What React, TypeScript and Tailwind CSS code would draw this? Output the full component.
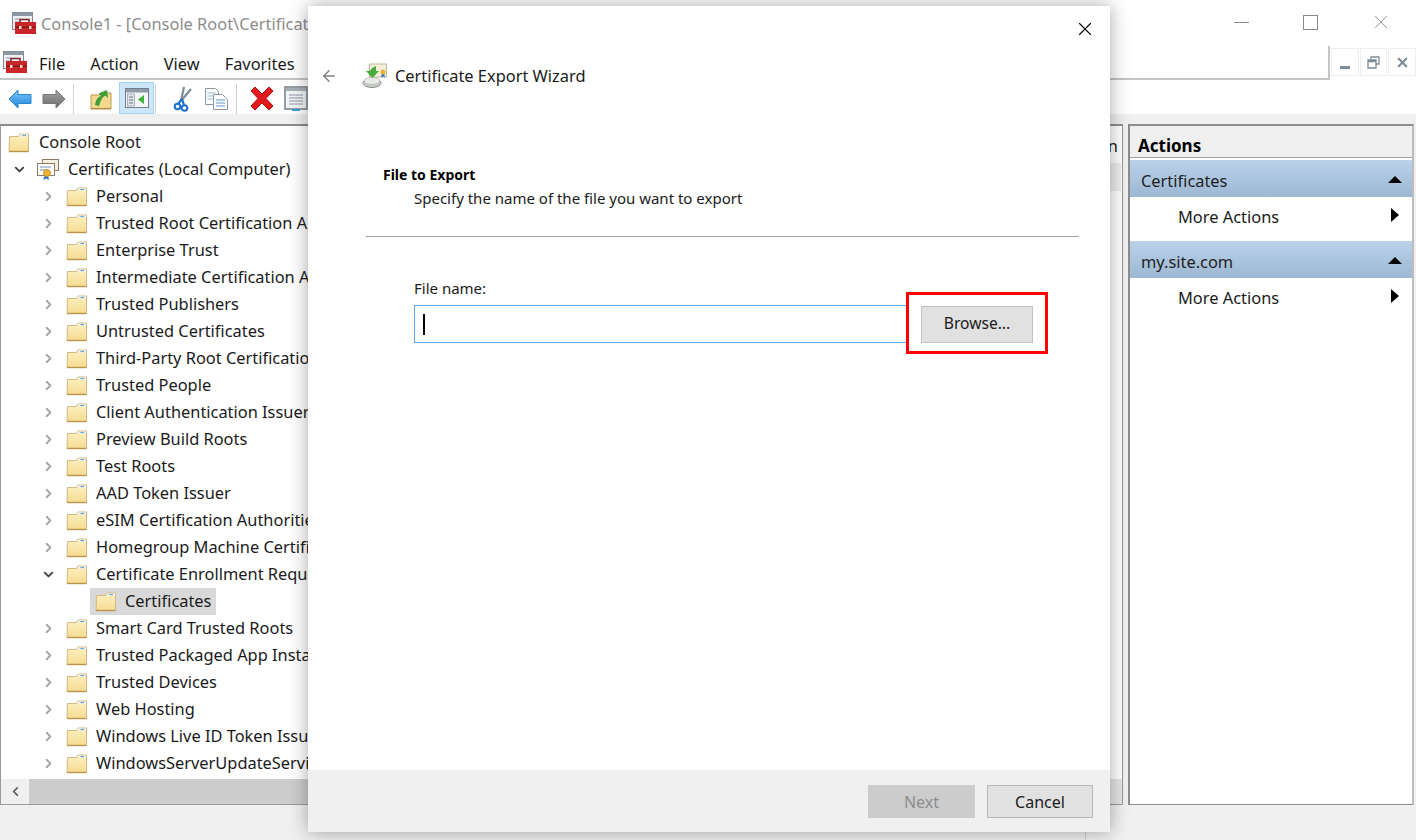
import { ChevronDown, ChevronRight, ArrowLeft, X } from "lucide-react";

const treeItems = [
  "Personal",
  "Trusted Root Certification Authorities",
  "Enterprise Trust",
  "Intermediate Certification Authorities",
  "Trusted Publishers",
  "Untrusted Certificates",
  "Third-Party Root Certification Authorities",
  "Trusted People",
  "Client Authentication Issuers",
  "Preview Build Roots",
  "Test Roots",
  "AAD Token Issuer",
  "eSIM Certification Authorities",
  "Homegroup Machine Certificates",
];

const treeItemsAfter = [
  "Smart Card Trusted Roots",
  "Trusted Packaged App Installation Authorities",
  "Trusted Devices",
  "Web Hosting",
  "Windows Live ID Token Issuer",
  "WindowsServerUpdateServices",
];

function FolderIcon() {
  return (
    <svg width="22" height="20" viewBox="0 0 22 20" className="shrink-0">
      <defs>
        <linearGradient id="fold" x1="0" y1="0" x2="0" y2="1">
          <stop offset="0" stopColor="#fdf0c0" />
          <stop offset="1" stopColor="#f6dc94" />
        </linearGradient>
      </defs>
      <path d="M1.500 3.500h9l1.500-2.500h8.500v17.500H1z" fill="url(#fold)" stroke="#d3b97f" strokeWidth="1" />
      <path d="M12.500 1.500h7.500v2h-9z" fill="#eef1f2" />
      <path d="M14.500 2.500h3.500" stroke="#5aa3dc" strokeWidth="1.200" />
      <path d="M1 18.500h19.500" stroke="#b9954d" strokeWidth="1.400" />
    </svg>
  );
}

function CertStoreIcon() {
  return (
    <svg width="23" height="23" viewBox="0 0 23 23" className="shrink-0">
      <rect x="6.500" y="1.500" width="16" height="11" fill="#f7efe0" stroke="#8a7a66" />
      <rect x="1.500" y="5.500" width="17" height="12" fill="#fffdf8" stroke="#8a7a66" />
      <path d="M4 9h11M4 12h7" stroke="#6f93bd" strokeWidth="1.200" />
      <path d="M9 17l-2 5 3-1.500 3 1.500-1-5z" fill="#2f76c6" />
      <circle cx="11" cy="15" r="3.500" fill="#eeb132" stroke="#c28414" strokeWidth="0.700" />
    </svg>
  );
}

function ToolboxIcon({ size = 24 }: { size?: number }) {
  return (
    <svg width={size} height={size} viewBox="0 0 24 24" className="shrink-0">
      <rect x="0.500" y="1.500" width="20" height="17" fill="#eef0f3" stroke="#7e8792" />
      <rect x="0.500" y="1.500" width="20" height="3.500" fill="#8e98a3" />
      <path d="M3 8h5M3 11h5M3 14h5" stroke="#8e98a3" strokeWidth="1.200" />
      <path d="M8 11V8.500h9V11" fill="none" stroke="#7c2323" strokeWidth="1.500" />
      <rect x="3" y="11" width="21" height="12" fill="#c9262a" />
      <rect x="3" y="15.500" width="21" height="1.500" fill="#8d1717" />
      <rect x="7" y="15" width="2.500" height="3" fill="#e9d8c8" />
      <rect x="17" y="15" width="2.500" height="3" fill="#e9d8c8" />
    </svg>
  );
}

function NavArrow({ dir, gray }: { dir: "left" | "right"; gray?: boolean }) {
  return (
    <svg width="24" height="20" viewBox="0 0 24 20" className="shrink-0">
      <defs>
        <linearGradient id="navBlue" x1="0" y1="0" x2="0" y2="1">
          <stop offset="0" stopColor="#7cc6f7" />
          <stop offset="1" stopColor="#1e86dc" />
        </linearGradient>
        <linearGradient id="navGray" x1="0" y1="0" x2="0" y2="1">
          <stop offset="0" stopColor="#a5a5a5" />
          <stop offset="1" stopColor="#6a6a6a" />
        </linearGradient>
      </defs>
      <path
        d={dir === "left" ? "M1 10 10 1v4.500h13v9H10V19z" : "M23 10 14 1v4.500H1v9h13V19z"}
        fill={gray ? "url(#navGray)" : "url(#navBlue)"}
        stroke={gray ? "#777777" : "#2a86d0"}
        strokeLinejoin="round"
      />
    </svg>
  );
}

function UpFolderIcon() {
  return (
    <svg width="22" height="22" viewBox="0 0 22 22" className="shrink-0">
      <path d="M1 7h8l2-2h10v16H1z" fill="#f3d98d" stroke="#bd9a52" />
      <path d="M1 20.500h20" stroke="#b58f45" strokeWidth="1.200" />
      <path d="M5 17c1-6 3-8 6-9L8.500 5.500 17 2l1 8-2.500-2.500C12 9 11 12 9 18z" fill="#3f9e36" />
    </svg>
  );
}

function ConsoleTreeIcon() {
  return (
    <svg width="24" height="20" viewBox="0 0 24 20" className="shrink-0">
      <rect x="0.500" y="0.500" width="23" height="19" fill="#f4f6f8" stroke="#76808c" />
      <rect x="1" y="1" width="22" height="3.500" fill="#8f9aa6" />
      <rect x="2.500" y="6" width="7" height="12" fill="#dde3e9" stroke="#8f9aa6" strokeWidth="0.700" />
      <path d="M4 9h4M4 12h4M4 15h4" stroke="#6c7a88" />
      <path d="M19 7v9l-6-4.500z" fill="#3fb23f" />
    </svg>
  );
}

function ScissorsIcon() {
  return (
    <svg width="20" height="26" viewBox="0 0 20 26" className="shrink-0">
      <path d="M8 15 11 1M8 15 18 3" stroke="#7e8c99" strokeWidth="2.200" fill="none" />
      <path d="M9 13 5 18M9 13l2 6" stroke="#1c6fcc" strokeWidth="2.200" fill="none" />
      <circle cx="4.500" cy="20.500" r="2.800" fill="none" stroke="#1c6fcc" strokeWidth="2" />
      <circle cx="11.500" cy="22" r="2.800" fill="none" stroke="#1c6fcc" strokeWidth="2" />
    </svg>
  );
}

function CopyIcon() {
  return (
    <svg width="25" height="24" viewBox="0 0 25 24" className="shrink-0">
      <path d="M1.500 1.500h10l3 3v13h-13z" fill="#fbfcfd" stroke="#8d97a1" />
      <path d="M3.500 6h8M3.500 9h8M3.500 12h5" stroke="#9fb6cb" />
      <path d="M9.500 7.500h9l5 5v10h-14z" fill="#fbfcfd" stroke="#8d97a1" />
      <path d="M12 13h9M12 16h9M12 19h9" stroke="#5d9ad2" />
    </svg>
  );
}

function DeleteIcon() {
  return (
    <svg width="26" height="25" viewBox="0 0 26 25" className="shrink-0">
      <path d="M2 5 6 1l7 7 7-7 4 4-7 7.500 7 7.500-4 4-7-7-7 7-4-4 7-7.500z" fill="#e0191c" stroke="#b90f12" strokeLinejoin="round" />
    </svg>
  );
}

function PropertiesIcon() {
  return (
    <svg width="24" height="26" viewBox="0 0 24 26" className="shrink-0">
      <rect x="1" y="1" width="22" height="22" fill="#f4f5f6" stroke="#767e87" strokeWidth="1.500" />
      <rect x="2" y="2" width="20" height="3" fill="#a8b0b8" />
      <path d="M5 9h14M5 12h14M5 15h14M5 18h14" stroke="#8c97a2" />
      <path d="M8 24h8" stroke="#3da0dc" strokeWidth="2" />
    </svg>
  );
}

function WizardIcon() {
  return (
    <svg width="26" height="26" viewBox="0 0 26 26" className="shrink-0">
      <rect x="7.500" y="1" width="17" height="13" fill="#f6efdc" stroke="#c4b69c" />
      <path d="M20 9.500l-1 5 2-1 2 1-1-5z" fill="#2f76c6" />
      <circle cx="21" cy="9" r="2.500" fill="#eeb132" />
      <ellipse cx="10" cy="20" rx="9" ry="4.500" fill="#c9cdca" stroke="#8b908c" />
      <ellipse cx="10" cy="18" rx="8" ry="3.500" fill="#e9ebe9" stroke="#a7aba8" strokeWidth="0.600" />
      <path d="M14 3v5h3l-6.500 7L4 8h4l2-3z" fill="#47ad3a" />
    </svg>
  );
}

function TreeRow({ label, open }: { label: string; open?: boolean }) {
  return (
    <div className="flex h-[27px] items-center">
      <div className="flex w-[65px] shrink-0 justify-end pr-[10px]">
        {open ? (
          <ChevronDown size={15} strokeWidth={3} className="text-[#404040]" />
        ) : (
          <ChevronRight size={15} strokeWidth={3} className="text-[#a6a6a6]" />
        )}
      </div>
      <FolderIcon />
      <span className="ml-2">{label}</span>
    </div>
  );
}

function ActionGroup({ title }: { title: string }) {
  return (
    <div>
      <div className="flex h-[37px] items-center justify-between bg-gradient-to-b from-[#bad2ea] to-[#9db8d3] pl-[11px] pr-[10px] pt-[6px] text-[#1e1e1e]">
        <span>{title}</span>
        <div className="mb-1 h-0 w-0 border-x-[7px] border-b-[7px] border-x-transparent border-b-black" />
      </div>
      <div className="flex h-[44px] items-start justify-between pl-[48px] pr-[13px] pt-[8px]">
        <span>More Actions</span>
        <div className="mt-[3px] h-0 w-0 border-y-[7px] border-l-[8px] border-y-transparent border-l-black" />
      </div>
    </div>
  );
}

export default function App() {
  return (
    <div
      className="relative flex h-[840px] w-[1416px] flex-col overflow-hidden bg-white text-[16.4px] text-[#1a1a1a]"
      style={{ fontFamily: '"Noto Sans", "Open Sans", sans-serif' }}
    >
      {/* title bar */}
      <div className="flex h-[46px] shrink-0 items-center pl-[12px]">
        <ToolboxIcon />
        <span className="ml-[5px] mt-[3px] whitespace-nowrap text-[#8c8c8c]">Console1 - [Console Root\Certificates (Local Computer)\Certificate Enrollment Requests\Certificates]</span>
        <div className="-mt-[2px] ml-auto flex items-center">
          <div className="mr-[54px] h-px w-[15px] bg-[#8a8a8a]" />
          <div className="mr-[52px] size-[15px] border border-[#8a8a8a]" />
          <X size={22} strokeWidth={1} className="mr-[24px] text-[#8a8a8a]" />
        </div>
      </div>

      {/* menu bar */}
      <div className="flex h-[34px] shrink-0 items-stretch">
        <div className="flex flex-1 items-center border-b-2 border-[#c4c4c4] pl-[3px]">
          <ToolboxIcon />
          <span className="ml-[12px] mt-[5px]">File</span>
          <span className="ml-[25px] mt-[5px]">Action</span>
          <span className="ml-[25px] mt-[5px]">View</span>
          <span className="ml-[25px] mt-[5px]">Favorites</span>
        </div>
        <div className="flex w-[88px] items-start gap-[1px] border-l-2 border-[#c4c4c4] pl-[1px] pt-[2px]">
          <div className="flex h-[28px] w-[28px] items-end justify-center border border-[#eeeeee] pb-[6px]">
            <div className="h-[3px] w-[10px] bg-[#7e8b98]" />
          </div>
          <div className="flex h-[28px] w-[28px] items-center justify-center border border-[#eeeeee]">
            <svg width="13" height="13" viewBox="0 0 13 13">
              <path d="M4 3V1h8v7h-3M1 4h8v8H1zM1 5.500h8" fill="none" stroke="#7e8b98" strokeWidth="1.300" />
            </svg>
          </div>
          <div className="flex h-[28px] w-[28px] items-center justify-center border border-[#eeeeee]">
            <X size={15} strokeWidth={3.500} className="text-[#7e8b98]" />
          </div>
        </div>
      </div>

      {/* toolbar */}
      <div className="flex h-[34px] shrink-0 items-center pl-[8px] pt-[3px]">
        <NavArrow dir="left" />
        <div className="ml-[10px]"><NavArrow dir="right" gray /></div>
        <div className="ml-[7px] h-[30px] w-px bg-[#d0d0d0]" />
        <div className="ml-[16px]"><UpFolderIcon /></div>
        <div className="ml-[7px] flex h-[32px] w-[35px] items-center justify-center self-end border border-[#a8d2f2] bg-[#cce6fa]">
          <ConsoleTreeIcon />
        </div>
        <div className="ml-[1px] h-[30px] w-px bg-[#d0d0d0]" />
        <div className="ml-[17px]"><ScissorsIcon /></div>
        <div className="ml-[11px]"><CopyIcon /></div>
        <div className="ml-[7px] h-[30px] w-px bg-[#d0d0d0]" />
        <div className="ml-[12px]"><DeleteIcon /></div>
        <div className="ml-[9px]"><PropertiesIcon /></div>
      </div>
      <div className="h-[10px] shrink-0 bg-[#f0f0f0]" />

      {/* panes */}
      <div className="flex min-h-0 flex-1 bg-[#f0f0f0]">
        <div className="flex w-[1123px] shrink-0 overflow-hidden border-x border-t-2 border-b border-x-[#9a9a9a] border-t-[#8d8d8d] border-b-[#9a9a9a] bg-white">
          {/* console tree */}
          <div className="flex w-[700px] shrink-0 flex-col">
            <div className="min-h-0 flex-1 overflow-hidden whitespace-nowrap pt-[3px]">
              <div className="flex h-[27px] items-center pl-[7px]">
                <FolderIcon />
                <span className="ml-[9px]">Console Root</span>
              </div>
              <div className="flex h-[27px] items-center">
                <div className="flex w-[35px] shrink-0 justify-end pr-[9px]">
                  <ChevronDown size={15} strokeWidth={3} className="text-[#404040]" />
                </div>
                <CertStoreIcon />
                <span className="ml-[9px]">Certificates (Local Computer)</span>
              </div>
              {treeItems.map((item) => (
                <TreeRow key={item} label={item} />
              ))}
              <TreeRow label="Certificate Enrollment Requests" open />
              <div className="flex h-[27px] items-center">
                <div className="ml-[89px] flex h-[27px] items-center bg-[#d9d9d9] pl-[5px] pr-[5px]">
                  <FolderIcon />
                  <span className="ml-2">Certificates</span>
                </div>
              </div>
              {treeItemsAfter.map((item) => (
                <TreeRow key={item} label={item} />
              ))}
            </div>
            <div className="flex h-[25px] shrink-0 items-stretch bg-[#f0f0f0]">
              <div className="flex w-[28px] items-center justify-center">
                <ChevronRight size={15} strokeWidth={2.500} className="rotate-180 text-[#505050]" />
              </div>
              <div className="flex-1 bg-[#cdcdcd]" />
            </div>
          </div>
          {/* result pane */}
          <div className="flex min-w-0 flex-1 flex-col">
            <div className="flex h-[37px] shrink-0 items-center justify-end whitespace-nowrap pr-[4px] pt-[3px]">Description</div>
            <div className="mr-px h-[28px] shrink-0 bg-[#eeeeee]" />
            <div className="mt-auto h-[25px] shrink-0 bg-[#e6e6e6]" />
          </div>
        </div>
        <div className="ml-[5px] flex w-[286px] shrink-0 flex-col border-2 border-b border-[#8d8d8d] border-r-[#bdbdbd] bg-white">
          <div className="flex h-[32px] shrink-0 items-center border-b border-[#a0a0a0] bg-[#f0f0f0] pl-[8px] pt-[9px] text-[17px] font-bold text-black">
            Actions
          </div>
          <div className="mt-[2px]">
            <ActionGroup title="Certificates" />
            <ActionGroup title="my.site.com" />
          </div>
        </div>
      </div>

      {/* status bar */}
      <div className="flex h-[35px] shrink-0 justify-end bg-[#f0f0f0] pr-[330px]">
        <div className="w-px bg-[#d4d4d4]" />
      </div>

      {/* wizard dialog */}
      <div className="absolute left-[308px] top-[6px] flex h-[826px] w-[802px] flex-col bg-white shadow-[0_0_18px_rgba(0,0,0,0.35)]">
        <div className="flex justify-end pr-[14px] pt-[12px]">
          <X size={22} strokeWidth={1.200} className="text-black" />
        </div>
        <div className="mt-[23px] flex items-center pl-[12px]">
          <ArrowLeft size={18} strokeWidth={2} className="text-[#808080]" />
          <div className="ml-[24px]"><WizardIcon /></div>
          <span className="ml-[7px] text-[16.4px]">Certificate Export Wizard</span>
        </div>
        <div className="mt-[74px] pl-[75px]">
          <div className="text-[14px] font-bold leading-[24px] text-black">File to Export</div>
          <div className="pl-[31px] text-[15px] leading-[23px]">Specify the name of the file you want to export</div>
        </div>
        <div className="ml-[58px] mr-[31px] mt-[26px] h-px bg-[#a0a0a0]" />
        <div className="mt-[39px] pl-[106px]">
          <div className="text-[15px] leading-[24px]">File name:</div>
          <div className="mt-[5px] flex items-center">
            <div className="flex h-[38px] w-[494px] items-center border border-[#5ba6e0] pl-[8px]">
              <div className="h-[21px] w-[2px] bg-black" />
            </div>
            <div className="relative ml-[13px]">
              <div className="flex h-[37px] w-[112px] items-center justify-center border border-[#c2c2c2] bg-[#e1e1e1] text-[15.6px]">
                Browse...
              </div>
              <div className="absolute -bottom-[11px] -left-[15px] -right-[15px] -top-[14px] border-[3px] border-[#ff0000]" />
            </div>
          </div>
        </div>
        <div className="mt-auto flex h-[62px] items-center justify-end gap-[12px] bg-[#f0f0f0] pr-[17px]">
          <div className="flex h-[33px] w-[107px] items-center justify-center bg-[#cccccc] pt-px text-[16px] text-[#8c8c8c]">Next</div>
          <div className="flex h-[33px] w-[106px] items-center justify-center border border-[#b8b8b8] bg-[#e1e1e1] pt-px text-[16px]">Cancel</div>
        </div>
      </div>
    </div>
  );
}
